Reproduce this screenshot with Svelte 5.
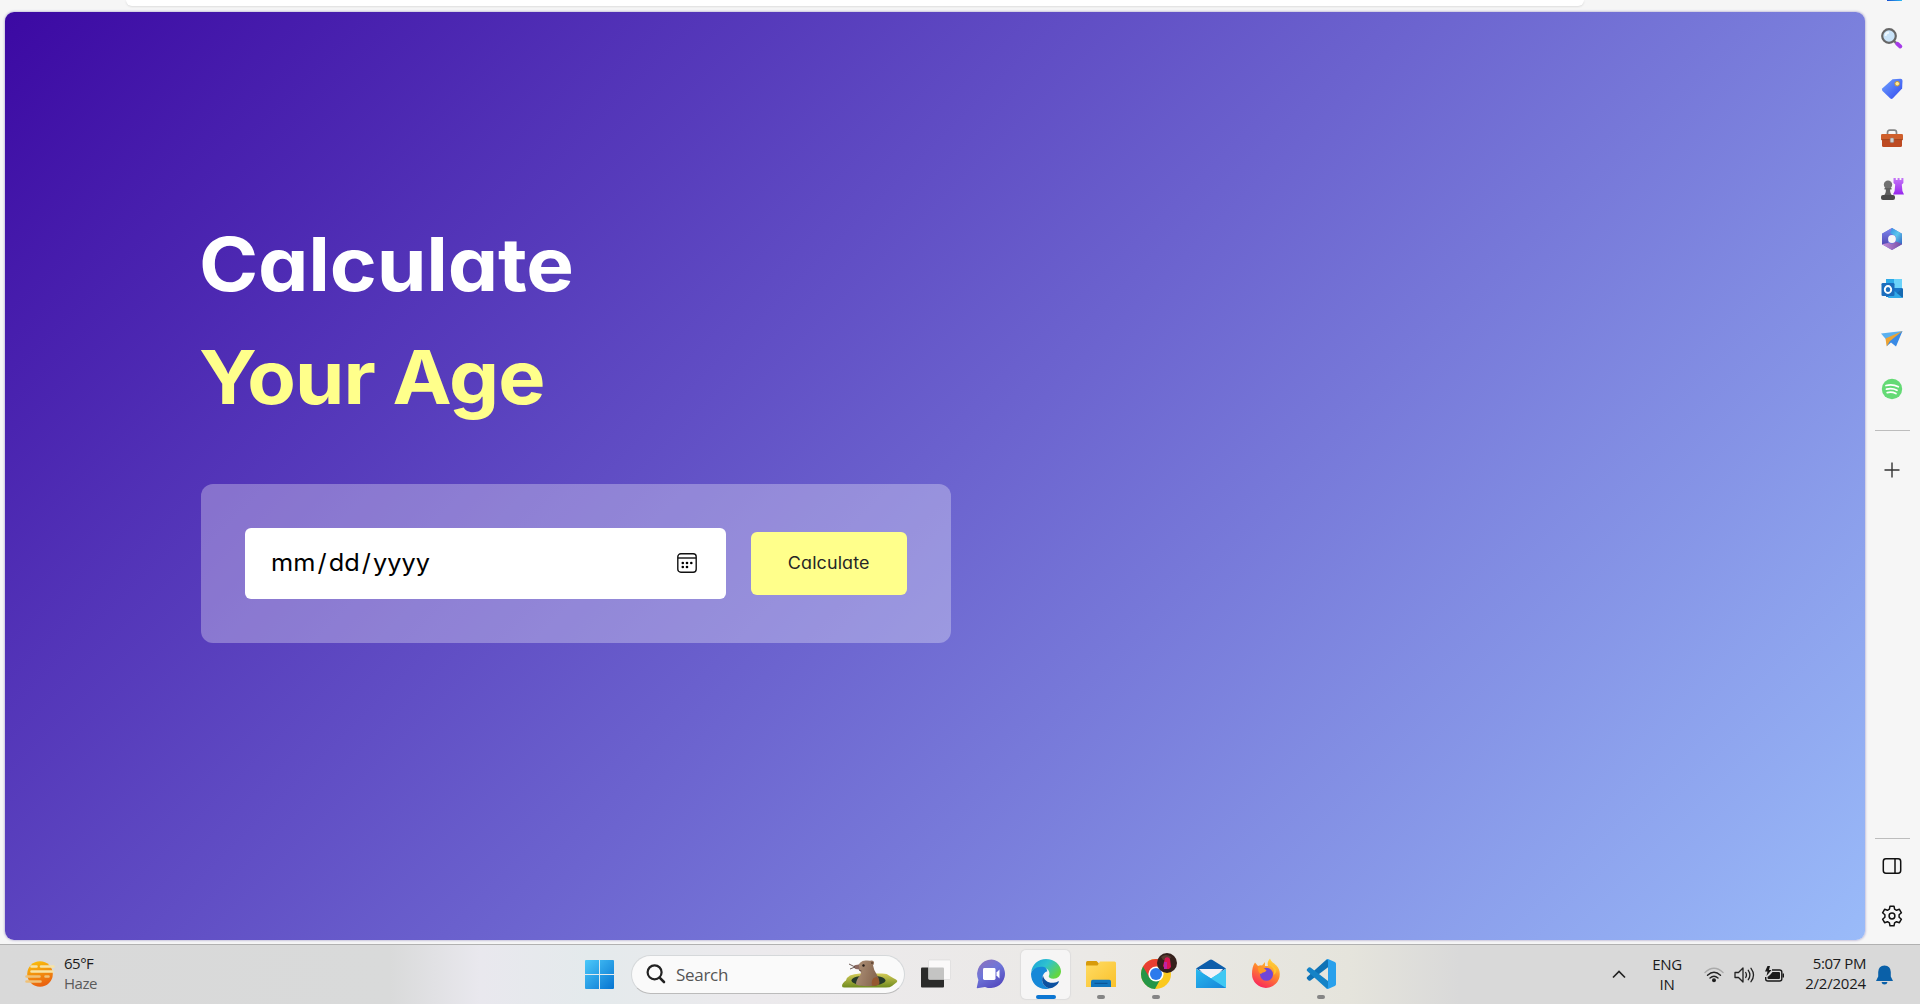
<script>
  const rail = ['search', 'tag', 'tools', 'games', 'office', 'outlook', 'drop', 'spotify'];
  const apps = [
    { name: 'taskview' },
    { name: 'chat' },
    { name: 'edge', active: true },
    { name: 'files', running: true },
    { name: 'chrome', running: true },
    { name: 'mail' },
    { name: 'firefox' },
    { name: 'code', running: true }
  ];
</script>

{#snippet railIcon(name)}
  <svg width="24" height="24" viewBox="0 0 24 24">
    {#if name === 'search'}
      <path d="M14 14l3 2.800" stroke="#777" stroke-width="2.400" />
      <path d="M17.300 16.800l3 2.700" stroke="#a63be8" stroke-width="4" stroke-linecap="round" />
      <circle cx="9" cy="9" r="6.800" fill="#c9e3f8" stroke="#666" stroke-width="2.200" />
      <path d="M5.500 9a3.600 3.600 0 0 1 3.500-3.500" fill="none" stroke="#eef8ff" stroke-width="1.800" />
    {:else if name === 'tag'}
      <path d="M12.500 2.200L20.500 1.800q2 0 2 2l-.400 7.700-9.200 9.800q-1.400 1.200-2.800 0L2.500 14q-1.200-1.400 0-2.800z" fill="url(#tagG)" />
      <circle cx="17.200" cy="6.700" r="2.300" fill="#ffe99a" stroke="#c79b35" />
    {:else if name === 'tools'}
      <path d="M7.500 8V5.500q0-2.300 2.300-2.300h4.400q2.300 0 2.300 2.300V8" fill="none" stroke="#858585" stroke-width="1.700" />
      <rect x="2" y="11" width="20" height="9" rx="1.500" fill="#bd4a22" />
      <rect x="1" y="7" width="22" height="6.300" rx="1.300" fill="#cf5f2c" />
      <path d="M1.500 12.700h21" stroke="#8f3a1c" stroke-width=".8" />
      <rect x="10.200" y="11" width="3.600" height="4.600" rx="1" fill="#cfcfcf" stroke="#888" stroke-width=".5" />
    {:else if name === 'games'}
      <path d="M13.500 1h2.300v2h1.800V1h2v2h1.800V1h2v5l-1.600 1.500.6 6.500 1.600 3.500h-11l1.600-3.500.6-6.500-1.700-1.500z" fill="url(#rookG)" />
      <circle cx="8" cy="7.700" r="4.200" fill="#717171" />
      <path d="M4.500 11h7v1.600h-1.400c0 3 .6 4.400 2 5.900H3.900c1.500-1.500 2-2.900 2-5.900H4.500z" fill="#5f5f5f" />
      <rect x="1" y="18" width="14" height="5" rx="2" fill="#4a4a4a" />
    {:else if name === 'office'}
      <path d="M12 1L2 6.800v10.400L12 23l10-5.800V6.800z" fill="#6c72dc" />
      <path d="M12 1L2 6.800v10.400L8 19.500V10l6-4z" fill="url(#offA)" />
      <path d="M2 17.200L12 23l10-5.800V12L12 17l-4-1z" fill="url(#offB)" />
      <path d="M12 1l10 5.800v10.400l-6-3V9.500L10 6z" fill="url(#offC)" />
      <circle cx="12" cy="12" r="3.900" fill="#f7f7f7" />
    {:else if name === 'outlook'}
      <path d="M6 2h15q1 0 1 1v17H6z" fill="#1877ca" />
      <path d="M6 2h8v6H6z" fill="#2daae8" /><path d="M14 2h8v9h-8z" fill="#6bd3fa" />
      <path d="M12 12l11 9H8z" fill="#31a9e8" /><path d="M23 11v10l-6-5z" fill="#176ab1" />
      <rect x="1.500" y="6" width="13" height="13" rx="1.300" fill="#1b6dbd" />
      <ellipse cx="8" cy="12.500" rx="3.200" ry="3.500" fill="none" stroke="#fff" stroke-width="1.900" />
    {:else if name === 'drop'}
      <path d="M1 6.500L22.500 4 7 13.500z" fill="#5ab0ef" />
      <path d="M22.500 4L16 19.500l-5-4-4 3.500-.5-7z" fill="#398ae5" />
      <path d="M22.500 4L5.500 11.500l1.200 8L10 14z" fill="#eda332" />
    {:else}
      <circle cx="12" cy="12" r="10.200" fill="#64da75" />
      <path d="M6 8.500q6.500-1.700 12.300 1.200M6.500 12.200q5.500-1.400 10.500 1M7.200 15.600q4.500-1.200 8.700.9" fill="none" stroke="#fff" stroke-width="1.800" stroke-linecap="round" />
    {/if}
  </svg>
{/snippet}

{#snippet appIcon(name)}
  <svg width="32" height="32" viewBox="0 0 32 32">
    {#if name === 'taskview'}
      <rect x="1" y="9.500" width="23" height="20" rx="1" fill="#2b2b2a" />
      <rect x="8.500" y="2" width="22" height="19.500" rx="1" fill="#fff" fill-opacity=".72" stroke="#d6d6d6" stroke-width=".6" />
    {:else if name === 'chat'}
      <path d="M16.500 1.500A14.300 14.300 0 1 1 10 28.900L2.200 30.300q-.7 0-.4-.9L3.400 22A14.500 14.500 0 0 1 16.500 1.500z" fill="url(#chatG)" />
      <rect x="8" y="10" width="12.500" height="12" rx="1.400" fill="#fff" />
      <path d="M21.500 14.500l3-3v9l-3-3z" fill="#fff" />
    {:else if name === 'edge'}
      <path d="M1.200 14.500C2 6.500 8 1 16 1c8.500 0 15 6 15 12.300 0 4.500-3.500 7.500-7.500 7.500-3.500 0-5.200-1.400-4.700-2.700 1.400-2.500.7-7.100-4.500-8.100C8 9 3 11 1.200 14.500z" fill="url(#edgeA)" />
      <path d="M14 9C7 7.800 1.500 11.500 1 16c0 8.500 6.300 15 14.500 15 2 0 3.500-.3 4.500-.7-6-1-8.500-5.600-7.800-10.500.5-3.300 2.500-6 5.200-6.500C17 11 15.700 9.500 14 9z" fill="#1688d8" />
      <path d="M13 17.500c-3.500 8 4 14.500 9.500 12.200 2.900-1.200 5.300-3.300 6.300-5.600.3-.9-.4-1-1-.7-6.500 3.600-13.800.2-14.800-5.900z" fill="#0c50a0" />
    {:else if name === 'files'}
      <path d="M1 4.500Q1 3 2.500 3h9L14 5.500V10H1z" fill="#d89b0b" />
      <path d="M1 7.500h11.500L15 3.500h14.500Q31 3.500 31 5v24H1z" fill="url(#fileG)" />
      <path d="M6 29v-5.500q0-1.700 1.700-1.700h16.600q1.700 0 1.700 1.700V29z" fill="#1276be" />
      <path d="M9.500 25.300h13" stroke="#0a4f8f" />
    {:else if name === 'chrome'}
      <circle cx="16" cy="16" r="15" fill="#fbc91e" />
      <path d="M16 16L3 8.500A15 15 0 0 0 15 31l6.500-11.900z" fill="#259647" />
      <path d="M3 8.500A15 15 0 0 1 29 8.500H16L9.500 19.700z" fill="#e83e32" />
      <circle cx="16" cy="16" r="7.600" fill="#fff" /><circle cx="16" cy="16" r="6" fill="#2c7aec" />
    {:else if name === 'mail'}
      <path d="M1 10.500L14.500 2q1.500-1 3 0L31 10.500 16 20z" fill="#0c5dab" />
      <path d="M4 11h24l-9 10h-6z" fill="#f4f2f7" />
      <path d="M1 11l15 9.500L31 11v19H1z" fill="#21b3ea" />
      <path d="M1 30L31 11v19z" fill="#3fc8f3" /><path d="M1 11l30 19H1z" fill="url(#mailG)" />
    {:else if name === 'firefox'}
      <path d="M5 4.500l3 3.500q2-.9 4-.6l3-3.400v4h3c-1-3 .2-5.600 2-7.500 1 3.500 4 4.500 6.500 7 2 2.200 3.300 5.200 3.300 8.500a13.900 13.900 0 0 1-27.800 0c0-4.500.8-8.300 3-11.500z" fill="url(#foxG)" />
      <circle cx="16.500" cy="16.300" r="6.500" fill="#7146d6" />
      <path d="M8 9.500c3.200-.9 6.500.2 8.500 3-1.800 2.800-5 1.300-5.300 3.700-2.200-1-3.500-3.500-3.200-6.700z" fill="#ff9a22" />
      <path d="M18 7c5 1 7.200 5.500 5.500 10 2-1 3-3 3-5.500L20.500 5z" fill="#ffc52d" />
    {:else}
      <path d="M23 1.200v8L5.500 22.500q-1 .6-1.900-.1l-1.500-1.500q-.9-1 0-2L21 2q1-.9 2-.8z" fill="#0f72b6" />
      <path d="M23 31v-8L5.500 9.500q-1-.6-1.900.1l-1.500 1.500q-.9 1 0 2L21 30.100q1 .9 2 .9z" fill="#1583c7" />
      <path d="M23 1l6.800 3q1.200.6 1.200 1.800v20.400q0 1.200-1.200 1.800L23 31q-1.300.1-2-.9 2 .8 2-1.100V3q0-1.900-2-1.100.7-1 2-.9z" fill="#29a0ec" />
    {/if}
  </svg>
{/snippet}

<svg class="defs" width="0" height="0">
  <defs>
    <linearGradient id="tagG" x1="0" y1="0" x2="1" y2="1"><stop stop-color="#70a4ff" /><stop offset="1" stop-color="#3148ee" /></linearGradient>
    <linearGradient id="rookG" x1="0" y1="0" x2="0" y2="1"><stop stop-color="#c576f7" /><stop offset="1" stop-color="#9726ef" /></linearGradient>
    <linearGradient id="offA" x1="0" y1="0" x2="0" y2="1"><stop stop-color="#7e86ee" /><stop offset="1" stop-color="#4c42ad" /></linearGradient>
    <linearGradient id="offB"><stop stop-color="#c890db" /><stop offset="1" stop-color="#714ba4" /></linearGradient>
    <linearGradient id="offC" x1="0" y1="0" x2="1" y2="1"><stop stop-color="#338be2" /><stop offset=".5" stop-color="#5bc7ed" /><stop offset="1" stop-color="#3463c2" /></linearGradient>
    <linearGradient id="chatG" x1="0" y1="0" x2=".6" y2="1"><stop stop-color="#9171b8" /><stop offset=".5" stop-color="#6f76d9" /><stop offset="1" stop-color="#554cc0" /></linearGradient>
    <linearGradient id="edgeA" x1="0" y1="0" x2="1" y2=".6"><stop stop-color="#169fd9" /><stop offset=".5" stop-color="#2fc2cf" /><stop offset="1" stop-color="#65d63e" /></linearGradient>
    <linearGradient id="fileG" x1="0" y1="0" x2="1" y2="1"><stop stop-color="#ffdc65" /><stop offset="1" stop-color="#fac12b" /></linearGradient>
    <linearGradient id="mailG" x1="0" y1="0" x2="1" y2="1"><stop stop-color="#28b9ef" /><stop offset="1" stop-color="#1785d8" /></linearGradient>
    <linearGradient id="foxG" x1=".8" y1="0" x2=".3" y2="1"><stop stop-color="#ffe744" /><stop offset=".45" stop-color="#ff8a2b" /><stop offset="1" stop-color="#f9245e" /></linearGradient>
    <linearGradient id="winG" gradientUnits="userSpaceOnUse" x1="0" y1="0" x2="29" y2="29"><stop stop-color="#4cc9fa" /><stop offset="1" stop-color="#0674d1" /></linearGradient>
    <linearGradient id="sunG" x1="0" y1="0" x2=".3" y2="1"><stop stop-color="#fcc60b" /><stop offset="1" stop-color="#ea6410" /></linearGradient>
    <linearGradient id="furG" x1="0" y1="0" x2="1" y2=".3"><stop stop-color="#b0937a" /><stop offset="1" stop-color="#86664f" /></linearGradient>
    <linearGradient id="hillG" x1="0" y1="0" x2="0" y2="1"><stop stop-color="#d3cb58" /><stop offset="1" stop-color="#6f8a1e" /></linearGradient>
  </defs>
</svg>

<div class="screen">
  <div class="browser">
    <div class="view">
      <div class="strip"><div class="address"></div></div>
      <main class="page">
        <h1>
          <span class="first">Calculate</span>
          <span class="accent">Your Age</span>
        </h1>
        <div class="card">
          <div class="date">
            <span class="fmt"><span>mm</span><span class="sl">/</span><span>dd</span><span class="sl">/</span><span>yyyy</span></span>
            <svg width="20" height="20" viewBox="0 0 20 20">
              <rect x=".8" y=".8" width="18.400" height="18.400" rx="3" fill="none" stroke="#111" stroke-width="1.400" />
              <path d="M1 5h18" stroke="#111" stroke-width="1.400" />
              <g fill="#000"><circle cx="5.800" cy="10" r="1.300" /><circle cx="10" cy="10" r="1.300" /><circle cx="14.300" cy="10" r="1.300" /><circle cx="5.800" cy="14" r="1.300" /><circle cx="10" cy="14" r="1.300" /></g>
            </svg>
          </div>
          <button><span>Calculate</span></button>
        </div>
      </main>
    </div>
    <aside class="rail">
      <div class="peek"></div>
      {#each rail as name}
        <div class="slot">{@render railIcon(name)}</div>
      {/each}
      <hr class="rule" />
      <div class="slot plus">
        <svg width="16" height="16" viewBox="0 0 16 16"><path d="M8 .5v15M.5 8h15" stroke="#333" stroke-width="1.400" /></svg>
      </div>
      <div class="grow"></div>
      <hr class="rule" />
      <div class="slot">
        <svg width="20" height="20" viewBox="0 0 20 20" fill="none" stroke="#111" stroke-width="1.500"><rect x="1.300" y="2.800" width="17.400" height="14.400" rx="2.600" /><path d="M13 3v14" /></svg>
      </div>
      <div class="slot">
        <svg width="22" height="22" viewBox="0 0 22 22" fill="none" stroke="#111" stroke-width="1.500" stroke-linejoin="round">
          <path d="M9 1.200h4l.6 3 1.900 1.100 2.900-1 2 3.500-2.300 2v2.400l2.300 2-2 3.500-2.900-1-1.900 1.100-.6 3H9l-.6-3-1.900-1.100-2.900 1-2-3.500 2.300-2V9.800l-2.300-2 2-3.500 2.900 1 1.900-1.100z" />
          <circle cx="11" cy="11" r="2.900" />
        </svg>
      </div>
    </aside>
  </div>

  <footer class="taskbar">
    <div class="weather">
      <svg width="30" height="28" viewBox="0 0 30 28">
        <circle cx="15" cy="14" r="12.800" fill="url(#sunG)" />
        <g stroke="#f7e3a6" stroke-width="2.600" stroke-linecap="round"><path d="M6.500 6.500h5M16 6.500h12.500M6.500 11.500h21" /><path d="M1.500 16.500h13M20.500 16.500h3M1.500 21.500h14" stroke="#efc178" /></g>
      </svg>
      <div class="lines"><span class="temp">65°F</span><span class="haze">Haze</span></div>
    </div>

    <div class="start">
      <svg width="29" height="29" viewBox="0 0 29 29" fill="url(#winG)"><path d="M1 0h13v14H0V1q0-1 1-1zM15 0h13q1 0 1 1v13H15zM0 15h14v14H1q-1 0-1-1zM15 15h14v13q0 1-1 1H15z" /></svg>
    </div>

    <div class="search">
      <svg class="lens" width="20" height="20" viewBox="0 0 20 20" fill="none" stroke="#222" stroke-width="2.200"><circle cx="8.600" cy="8.300" r="7" /><path d="M13.600 13.600l4.400 4.400" stroke-width="2.600" stroke-linecap="round" /></svg>
      <span>Search</span>
      <svg class="mole" width="56" height="28" viewBox="0 0 56 28">
        <path d="M0 26q0-3 4-5.500 1-3.500 4-5 4-1.500 10-2h20q7-.5 9 2 4 2.500 7 4 2 1.200 1 2.500l-5 4q-2 1.500-6 1.500H4Q0 28 0 26z" fill="url(#hillG)" />
        <ellipse cx="26.500" cy="20.500" rx="17" ry="5.200" fill="#263a2a" />
        <path d="M14 24.500c0-3.500 1.500-6.500 4-9q1.500-2 .5-4-2-1.500-2.500-4.500 1-6 7.500-6.500 3-.2 4.500.3 3.500-1 4 1.400.2 2.300-1 3 .8 5 3.500 8.800Q37.500 18 37 24q-4 2.200-11.500 2.200T14 24.500z" fill="url(#furG)" />
        <path d="M30 25.500c-1-5 1-8.500 5-8.500q3.500 4 2 7.500-3 1.800-7 1z" fill="#95572f" />
        <path d="M17 4.500q-4 0-5 1.500-.5 2 1.500 3l4 .5z" fill="#8c6a60" />
        <path d="M7 4l6 3-5 2M17 10l2.500 1" fill="none" stroke="#5d4a45" stroke-width=".9" />
        <circle cx="21.500" cy="5.500" r="1.200" fill="#251c18" /><circle cx="30" cy="3" r="1" fill="#5d4232" />
      </svg>
    </div>

    <div class="apps">
      {#each apps as app}
        <div class="app" class:active={app.active}>
          {@render appIcon(app.name)}
          {#if app.name === 'chrome'}
            <svg class="avatar" width="20" height="20" viewBox="0 0 20 20"><circle cx="10" cy="10" r="10" fill="#35201c" /><path d="M4 4q5-4 10 0l-2 3H6z" fill="#593c31" /><path d="M8 5q3-2 5 1l1 8-2 2H8l-2-3z" fill="#dd1453" /><path d="M7 9l3 0v7H7z" fill="#be24a6" /></svg>
          {/if}
          {#if app.active}<i class="bar"></i>{:else if app.running}<i class="dot"></i>{/if}
        </div>
      {/each}
    </div>

    <div class="tray">
      <svg class="chev" width="14" height="9" viewBox="0 0 14 9"><path d="M1 7.500L7 1.500l6 6" fill="none" stroke="#222" stroke-width="1.700" /></svg>
      <div class="lines lang"><span>ENG</span><span>IN</span></div>
      <svg class="wifi" width="20" height="16" viewBox="0 0 20 16" fill="none" stroke="#222" stroke-width="1.400" stroke-linecap="round">
        <path d="M1 5.500q9-8.500 18 0" stroke="#aaa" /><path d="M3.500 8.200q6.500-6 13 0M6 11q4-3.600 8 0" /><circle cx="10" cy="13.300" r="1.300" fill="#111" />
      </svg>
      <svg class="vol" width="21" height="18" viewBox="0 0 21 18" fill="none" stroke="#222" stroke-width="1.300" stroke-linecap="round" stroke-linejoin="round">
        <path d="M1 6.500h3.500L9 2v14l-4.500-4.500H1zM11.700 6.500q1.500 2.500 0 5M14.300 4.300q3.200 4.700 0 9.400M17 2.300q5 6.700 0 13.400" />
      </svg>
      <svg class="bat" width="21" height="18" viewBox="0 0 21 18">
        <path d="M8 4h7.500q2.300 0 2.300 2v7q0 2-2.300 2H4q-2.300 0-2.300-2v-2" fill="none" stroke="#1a1a1a" stroke-width="1.400" />
        <path d="M8.500 6H15q1 0 1 1v5q0 1-1 1H4.500q-1 0-1-1v-1L6 9zM18.500 7.500H20v4h-1.500z" fill="#1a1a1a" />
        <path d="M3.500 0L1 5.500h2.500L2.500 10l5-6H5l1-4z" fill="#1a1a1a" />
      </svg>
      <div class="lines clock"><span class="time">5:07 PM</span><span class="day">2/2/2024</span></div>
      <svg class="bell" width="17" height="20" viewBox="0 0 17 20" fill="#0a60a8"><path d="M8.500.5q6 0 6.300 6.500v4.500L17 16H0l2.200-4.500V7Q2.500.5 8.500.5zM5.500 17h6q-.5 2.500-3 2.500t-3-2.500z" /></svg>
    </div>
  </footer>
</div>

<style>
  :global(body) { margin: 0; overflow: hidden; }
  * { box-sizing: border-box; }
  .defs { position: absolute; }
  svg { display: block; flex: none; }
  .screen { width: 1920px; height: 1004px; display: flex; flex-direction: column; background: #f6f6f6; font-family: "Open Sans", "Noto Sans", sans-serif; overflow: hidden; }
  .browser { height: 944px; display: flex; }
  .view { width: 1865px; padding: 0 0 4px 5px; display: flex; flex-direction: column; }
  .strip { height: 12px; padding-left: 121px; }
  .address { width: 1458px; height: 6px; background: #fff; border-radius: 0 0 16px 16px; box-shadow: 0 1px 2px #ddd; }
  .page {
    flex: 1; border-radius: 9px; padding: 196px 0 0 196px;
    background: linear-gradient(135deg, #3c09a3, #9abbf9);
    box-shadow: 0 0 2px 1px #c9c5de;
    font-family: Inter, "Open Sans", sans-serif; font-feature-settings: "cv11", "ss03";
  }
  h1 { margin: 0; font-size: 74px; font-weight: 650; line-height: 113px; color: #fff; display: flex; flex-direction: column; align-items: flex-start; height: 225px; }
  h1 span { transform-origin: 0 50%; margin-left: -2px; }
  .first { letter-spacing: -.2px; transform: scaleX(1.082); }
  .accent { color: #ffff8b; letter-spacing: -.9px; transform: scaleX(1.072); }
  .card { margin-top: 51px; width: 750px; height: 159px; padding: 44px; display: flex; align-items: center; gap: 25px; border-radius: 12px; background: rgba(255, 255, 255, .3); }
  .date { width: 481px; height: 71px; padding: 0 29px 2px 26px; border-radius: 6px; background: #fff; display: flex; align-items: center; justify-content: space-between; }
  .fmt { font-size: 24px; color: #000; display: flex; transform: scaleX(1.055); transform-origin: 0 50%; }
  .sl { padding: 0 2px; }
  button { width: 156px; height: 63px; padding: 0 0 1px; border: 0; border-radius: 6px; background: #ffff8b; color: #262626; font: 400 17px Inter, sans-serif; font-feature-settings: inherit; letter-spacing: .1px; }
  button span { display: inline-block; transform: scaleX(1.055); }
  .rail { width: 55px; padding-right: 1px; display: flex; flex-direction: column; align-items: center; }
  .peek { width: 15px; height: 1px; margin: 0 0 13px 22px; align-self: flex-start; background: linear-gradient(90deg, #174ed0, #29baf3); flex: none; }
  .slot { height: 50px; width: 55px; display: flex; align-items: center; justify-content: center; flex: none; }
  .rule { width: 35px; height: 1px; margin: 16px 0 14px; border: 0; background: #bdbdbd; flex: none; }
  .grow { flex: 1; }
  .grow + .rule { margin: 0 0 2px; }
  .rail .slot:last-child { margin-bottom: 3px; }
  .taskbar {
    height: 60px; border-top: 1px solid #b1b1b1; display: flex; align-items: center;
    background: linear-gradient(90deg, #d9d9d9 0, #d9dada 390px, #e9e8ee 480px, #e4eaec 590px, #eceaed 750px, #ebe9e6 1100px, #e5e4dc 1350px, #d9d9d9 1460px);
  }
  .weather { width: 585px; padding: 0 0 2px 25px; display: flex; align-items: center; gap: 9px; }
  .lines { display: flex; flex-direction: column; font-size: 15px; line-height: 20px; color: #1b1b1b; white-space: nowrap; padding-bottom: 2px; }
  .temp { letter-spacing: -.5px; }
  .haze { color: #5b5b5b; letter-spacing: -.5px; }
  .start { width: 46px; }
  .search { width: 274px; height: 39px; margin-bottom: 1px; padding: 0 6px 0 14px; border-radius: 20px; border: 1px solid #d5d8da; border-bottom-color: #bbb; background: #fafafa; display: flex; align-items: center; font-size: 17px; color: #555; letter-spacing: -.3px; }
  .search span { margin-left: 10px; flex: 1; }
  .apps { display: flex; margin: 0 0 1px 3px; }
  .app { width: 49px; height: 49px; margin: 0 3px; border-radius: 5px; display: flex; align-items: center; justify-content: center; position: relative; }
  .active { background: #f6f5f5; box-shadow: 0 0 1px 1px #dedddd; }
  .bar, .dot { position: absolute; bottom: 0; height: 4px; border-radius: 2px; }
  .bar { width: 20px; background: #0c76d2; }
  .dot { width: 8px; background: #858585; }
  .avatar { position: absolute; top: 3px; right: 3px; }
  .tray { flex: 1; display: flex; align-items: center; padding-left: 264px; }
  .lang { width: 44px; margin-left: 19px; align-items: center; letter-spacing: -.3px; padding-bottom: 1px; }
  .wifi { margin-left: 15px; }
  .vol { margin-left: 10px; }
  .bat { margin-left: 9px; }
  .clock { width: 81px; align-items: flex-end; padding-bottom: 3px; }
  .time { letter-spacing: -.4px; }
  .day { letter-spacing: -.2px; }
  .bell { margin-left: 10px; }
</style>
